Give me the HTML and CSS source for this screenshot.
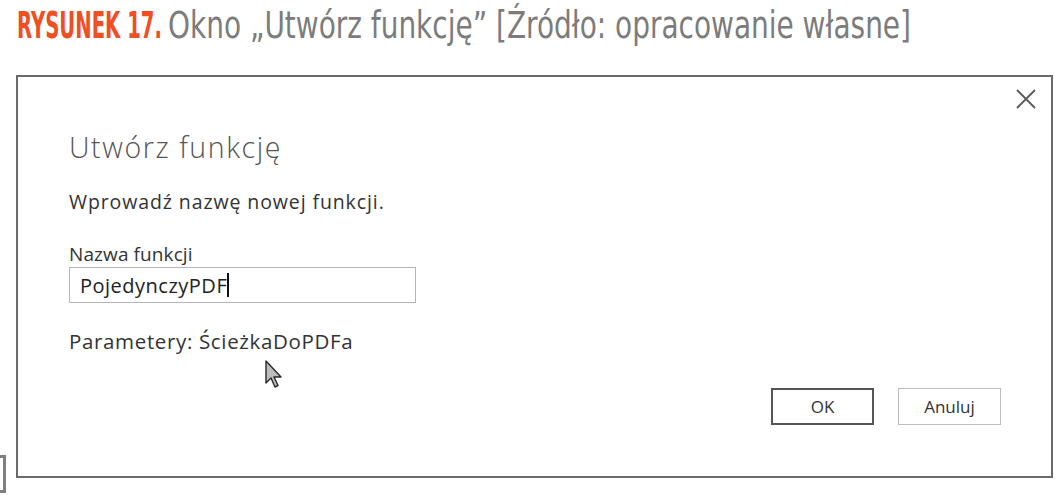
FILE: index.html
```html
<!DOCTYPE html>
<html lang="pl">
<head>
<meta charset="utf-8">
<title>Utwórz funkcję</title>
<link rel="stylesheet" href="styles.css">
</head>
<body>
<div class="caption">
  <div class="fig-box"><span class="fig">RYSUNEK 17.</span></div>
  <div class="cap-box"><span class="cap-text">Okno „Utwórz funkcję” [Źródło: opracowanie własne]</span></div>
</div>
<div class="row">
  <div class="bracket"></div>
  <div class="dialog">
    <div class="close">
      <svg width="20" height="20" viewBox="0 0 20 20"><path d="M1 1 L19 19 M19 1 L1 19" stroke="#5a5a5a" stroke-width="1.8" fill="none"/></svg>
    </div>
    <h1 class="title">Utwórz funkcję</h1>
    <p class="prompt">Wprowadź nazwę nowej funkcji.</p>
    <label class="label">Nazwa funkcji</label>
    <div class="input"><span>PojedynczyPDF</span><span class="caret"></span></div>
    <p class="params">Parametery: ŚcieżkaDoPDFa</p>
    <div class="pointer">
      <svg width="20" height="30" viewBox="0 0 20 30"><path d="M2 2 L2 24 L7 19 L11 28 L14 26.5 L10 18 L17 18 Z" fill="#bdbdbd" stroke="#2a2a2a" stroke-width="1.4" stroke-linejoin="round"/></svg>
    </div>
    <div class="buttons">
      <button class="btn btn-primary">OK</button>
      <button class="btn">Anuluj</button>
    </div>
  </div>
</div>
</body>
</html>
```
FILE: styles.css
```css
html, body {
  margin: 0;
  padding: 0;
  background: #ffffff;
  overflow: hidden;
}
.caption {
  display: flex;
  padding: 4px 0 0 17px;
  height: 44px;
  margin-bottom: 27px;
  font-family: "DejaVu Sans Condensed", "DejaVu Sans", sans-serif;
  font-stretch: condensed;
  font-size: 37px;
  line-height: 44px;
  white-space: nowrap;
}
.fig-box {
  width: 151px;
  flex: none;
}
.fig {
  display: inline-block;
  color: #f04e23;
  font-weight: bold;
  transform: scaleX(0.59);
  transform-origin: 0 0;
}
.cap-box {
  flex: 1;
  min-width: 0;
}
.cap-text {
  display: inline-block;
  color: #7c7c7c;
  transform: scaleX(0.84);
  transform-origin: 0 0;
}
.row {
  display: flex;
  align-items: flex-start;
}
.bracket {
  width: 3px;
  height: 32px;
  border: 3px solid #808080;
  border-left: none;
  margin-top: 380px;
  margin-right: 10px;
}
.dialog {
  position: relative;
  width: 1033px;
  height: 399px;
  border: 2px solid #6a6a6a;
  font-family: "Open Sans", "Noto Sans", sans-serif;
  color: #333;
}
.close {
  position: absolute;
  right: 15px;
  top: 12px;
  width: 20px;
  height: 20px;
}
.title {
  margin: 52px 0 0 51px;
  font-size: 28.5px;
  letter-spacing: 1.6px;
  font-weight: 300;
  color: #555;
  line-height: 36px;
}
.prompt {
  margin: 24px 0 0 51px;
  font-size: 19.5px;
  letter-spacing: 0.9px;
  line-height: 26px;
  color: #333;
}
.label {
  display: block;
  margin: 27px 0 0 51px;
  font-size: 19px;
  letter-spacing: 0.1px;
  line-height: 24px;
  color: #333;
}
.input {
  margin: 1px 0 0 51px;
  width: 335px;
  height: 34px;
  border: 1px solid #b5b5b5;
  padding-left: 10px;
  display: flex;
  align-items: center;
  font-size: 20px;
  letter-spacing: 0.5px;
  color: #222;
}
.caret {
  display: inline-block;
  width: 1.5px;
  height: 24px;
  background: #111;
  margin-left: 0;
}
.params {
  margin: 25px 0 0 51px;
  font-size: 20.5px;
  letter-spacing: 0.65px;
  line-height: 26px;
  color: #333;
}
.pointer {
  position: absolute;
  left: 246px;
  top: 282px;
}
.buttons {
  position: absolute;
  right: 50px;
  top: 311px;
  display: flex;
  gap: 24px;
}
.btn {
  width: 103px;
  height: 37px;
  background: #fff;
  border: 1px solid #bdbdbd;
  font-family: "Open Sans", "Noto Sans", sans-serif;
  font-size: 17px;
  color: #333;
  padding: 0;
}
.btn-primary {
  border: 2px solid #555;
}
```
